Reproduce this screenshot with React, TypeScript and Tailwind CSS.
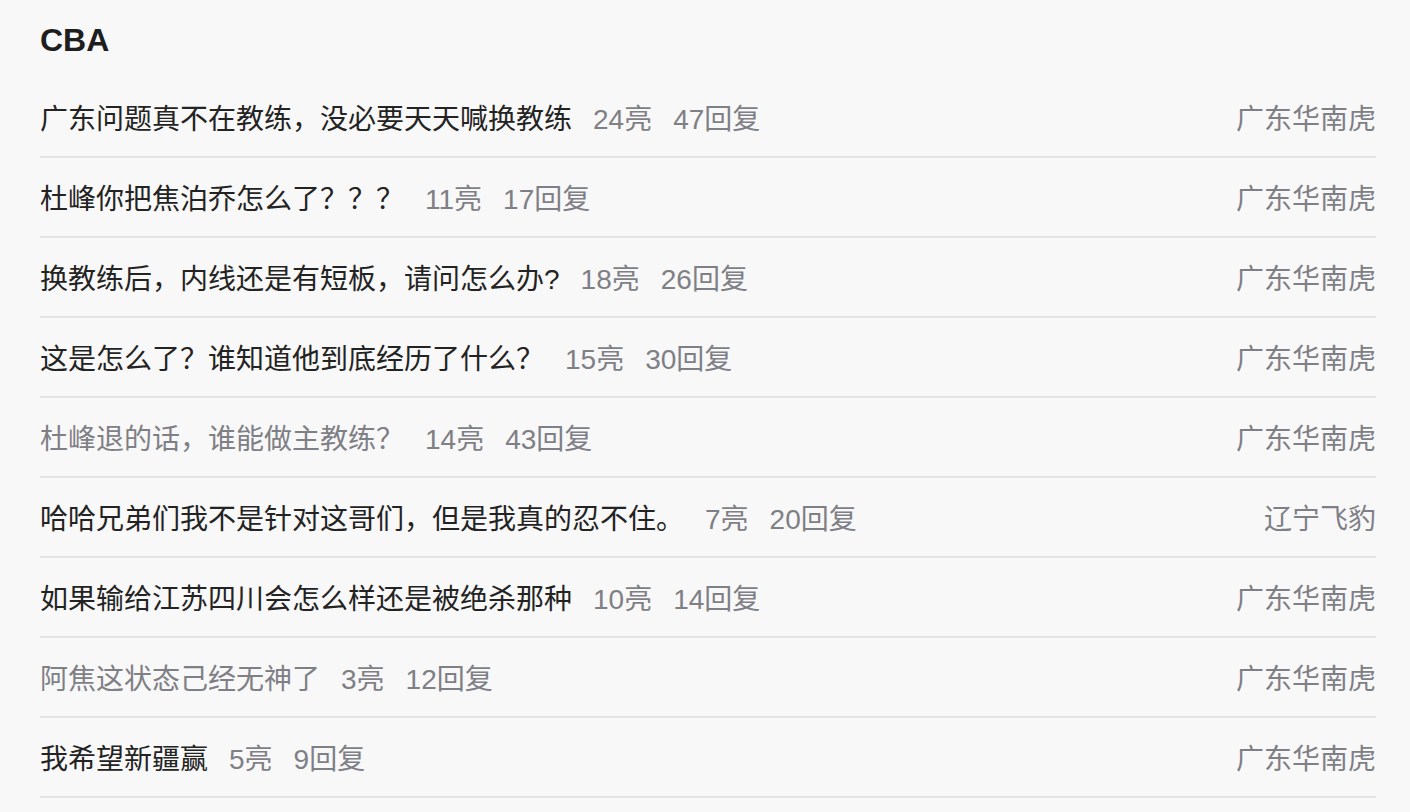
import React from "react";

type Row = { title: string; liang: number; reply: number; team: string; visited?: boolean };

const rows: Row[] = [
  { title: "广东问题真不在教练，没必要天天喊换教练", liang: 24, reply: 47, team: "广东华南虎" },
  { title: "杜峰你把焦泊乔怎么了？？？", liang: 11, reply: 17, team: "广东华南虎" },
  { title: "换教练后，内线还是有短板，请问怎么办?", liang: 18, reply: 26, team: "广东华南虎" },
  { title: "这是怎么了？谁知道他到底经历了什么？", liang: 15, reply: 30, team: "广东华南虎" },
  { title: "杜峰退的话，谁能做主教练？", liang: 14, reply: 43, team: "广东华南虎", visited: true },
  { title: "哈哈兄弟们我不是针对这哥们，但是我真的忍不住。", liang: 7, reply: 20, team: "辽宁飞豹" },
  { title: "如果输给江苏四川会怎么样还是被绝杀那种", liang: 10, reply: 14, team: "广东华南虎" },
  { title: "阿焦这状态己经无神了", liang: 3, reply: 12, team: "广东华南虎", visited: true },
  { title: "我希望新疆赢", liang: 5, reply: 9, team: "广东华南虎" },
];

export default function App() {
  return (
    <div
      className="min-h-[812px] w-full bg-[#f8f8f8] pl-[40px] pr-[34px]"
      style={{ fontFamily: '"Liberation Sans", "Noto Sans CJK SC", sans-serif' }}
    >
      <div className="flex h-[78px] items-center pt-[1px]">
        <h1 className="text-[32px] font-bold leading-none text-[#1e1e1e]">CBA</h1>
      </div>
      <ul>
        {rows.map((r, i) => (
          <li
            key={i}
            className="flex h-[80px] items-center justify-between border-b-2 border-[#e3e3e3] pt-[5px] text-[28px] leading-none"
          >
            <div className="flex items-center">
              <span className={r.visited ? "text-[#7f7f86]" : "text-[#232323]"}>{r.title}</span>
              <span className="ml-[21px] text-[#7f7f86]">{r.liang}亮</span>
              <span className="ml-[21px] text-[#7f7f86]">{r.reply}回复</span>
            </div>
            <span className="text-[#7f7f86]">{r.team}</span>
          </li>
        ))}
      </ul>
    </div>
  );
}
